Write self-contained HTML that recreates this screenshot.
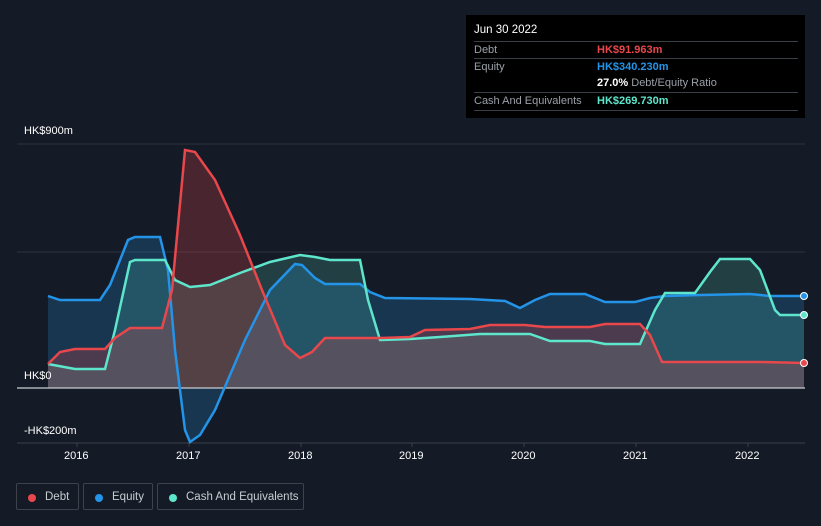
<!DOCTYPE html>
<html><head><meta charset="utf-8"><style>
body{margin:0;background:#151b26;width:821px;height:526px;overflow:hidden;font-family:"Liberation Sans",sans-serif;position:relative}
.tt{position:absolute;left:466px;top:15px;width:339px;height:103px;background:#000;}
.tt .h{position:absolute;left:8px;top:9px;color:#fff;font-size:11.5px}
.row{position:absolute;left:8px;width:324px;border-top:1px solid #3a3e45;font-size:11px;color:#9aa0a8;height:17px;line-height:17px}
.row span{position:absolute;left:123px;font-weight:bold}
.lab{position:absolute;color:#fff;font-size:11px}
.lg{position:absolute;top:483px;height:27px;border:1px solid #3d424b;border-radius:2px;color:#c8ccd2;font-size:11.5px;line-height:27px;box-sizing:border-box}
.lg i{position:absolute;left:11px;top:10px;width:8px;height:8px;border-radius:50%}
</style></head><body>
<svg width="821" height="526" style="position:absolute;left:0;top:0">
<line x1="17" y1="144" x2="805" y2="144" stroke="#2c323d"/>
<line x1="17" y1="252" x2="805" y2="252" stroke="#2c323d"/>
<line x1="17" y1="443" x2="805" y2="443" stroke="#3a404a"/>
<g stroke="#3a404a"><line x1="77" y1="443" x2="77" y2="447"/><line x1="189" y1="443" x2="189" y2="447"/><line x1="301" y1="443" x2="301" y2="447"/><line x1="412" y1="443" x2="412" y2="447"/><line x1="524" y1="443" x2="524" y2="447"/><line x1="636" y1="443" x2="636" y2="447"/><line x1="748" y1="443" x2="748" y2="447"/></g>
<path d="M48,296 L60,300 100,300 110,285 128,240 135,237 160,237 168,270 175,350 185,430 190,442 200,435 215,410 245,340 270,290 295,264 302,265 315,278 325,284 360,284 370,292 385,298 470,299 505,301 520,308 535,300 550,294 585,294 605,302 635,302 650,298 665,296 700,295 750,294 770,296 804,296 L804,388 L48,388Z" fill="#2394e8" fill-opacity="0.22"/>
<path d="M48,364 L75,369 105,369 115,330 130,262 135,260 165,260 175,280 190,287 210,285 240,273 270,262 300,255 315,257 330,260 360,260 368,300 380,340 410,339 440,337 480,334 530,334 550,341 590,341 605,344 640,344 655,310 665,293 695,293 710,272 720,259 750,259 760,270 775,310 780,315 804,315 L804,388 L48,388Z" fill="#5ee6cc" fill-opacity="0.18"/>
<path d="M48,364 L60,352 75,349 105,349 115,338 130,328 162,328 172,290 185,150 195,152 215,180 240,235 262,290 285,345 300,358 312,352 325,338 380,338 410,337 425,330 470,329 490,325 525,325 545,327 590,327 605,324 640,324 650,335 662,362 700,362 760,362 804,363 L804,388 L48,388Z" fill="#e8474b" fill-opacity="0.25"/>
<line x1="17" y1="388" x2="805" y2="388" stroke="#c9ccd1" stroke-width="1.2"/>
<polyline fill="none" stroke="#2394e8" stroke-width="2.5" points="48,296 60,300 100,300 110,285 128,240 135,237 160,237 168,270 175,350 185,430 190,442 200,435 215,410 245,340 270,290 295,264 302,265 315,278 325,284 360,284 370,292 385,298 470,299 505,301 520,308 535,300 550,294 585,294 605,302 635,302 650,298 665,296 700,295 750,294 770,296 804,296"/>
<polyline fill="none" stroke="#5ee6cc" stroke-width="2.5" points="48,364 75,369 105,369 115,330 130,262 135,260 165,260 175,280 190,287 210,285 240,273 270,262 300,255 315,257 330,260 360,260 368,300 380,340 410,339 440,337 480,334 530,334 550,341 590,341 605,344 640,344 655,310 665,293 695,293 710,272 720,259 750,259 760,270 775,310 780,315 804,315"/>
<polyline fill="none" stroke="#e8474b" stroke-width="2.5" points="48,364 60,352 75,349 105,349 115,338 130,328 162,328 172,290 185,150 195,152 215,180 240,235 262,290 285,345 300,358 312,352 325,338 380,338 410,337 425,330 470,329 490,325 525,325 545,327 590,327 605,324 640,324 650,335 662,362 700,362 760,362 804,363"/>
<circle cx="804" cy="296" r="3.5" fill="#2394e8" stroke="#fff" stroke-width="1"/>
<circle cx="804" cy="315" r="3.5" fill="#5ee6cc" stroke="#fff" stroke-width="1"/>
<circle cx="804" cy="363" r="3.5" fill="#e8474b" stroke="#fff" stroke-width="1"/>
</svg>
<div class="lab" style="left:24px;top:125px">HK$900m</div>
<div class="lab" style="left:24px;top:370px">HK$0</div>
<div class="lab" style="left:24px;top:425px">-HK$200m</div>
<div class="lab" style="left:64px;top:450px">2016</div>
<div class="lab" style="left:176px;top:450px">2017</div>
<div class="lab" style="left:288px;top:450px">2018</div>
<div class="lab" style="left:399px;top:450px">2019</div>
<div class="lab" style="left:511px;top:450px">2020</div>
<div class="lab" style="left:623px;top:450px">2021</div>
<div class="lab" style="left:735px;top:450px">2022</div>
<div class="tt"><div class="h">Jun 30 2022</div>
<div class="row" style="top:26px">Debt<span style="color:#e8474b">HK$91.963m</span></div>
<div class="row" style="top:43px">Equity<span style="color:#2394e8">HK$340.230m</span></div>
<div class="row" style="top:60px;border-top:none"><span style="color:#fff">27.0% <b style="color:#9aa0a8;font-weight:normal">Debt/Equity Ratio</b></span></div>
<div class="row" style="top:77px">Cash And Equivalents<span style="color:#5ee6cc">HK$269.730m</span></div>
<div class="row" style="top:95px;height:0"></div>
</div>
<div class="lg" style="left:16px;width:63px"><i style="background:#e8474b"></i><span style="position:absolute;left:28px">Debt</span></div>
<div class="lg" style="left:83px;width:70px"><i style="background:#2394e8"></i><span style="position:absolute;left:28px">Equity</span></div>
<div class="lg" style="left:157px;width:147px"><i style="background:#5ee6cc"></i><span style="position:absolute;left:28px">Cash And Equivalents</span></div>
</body></html>
